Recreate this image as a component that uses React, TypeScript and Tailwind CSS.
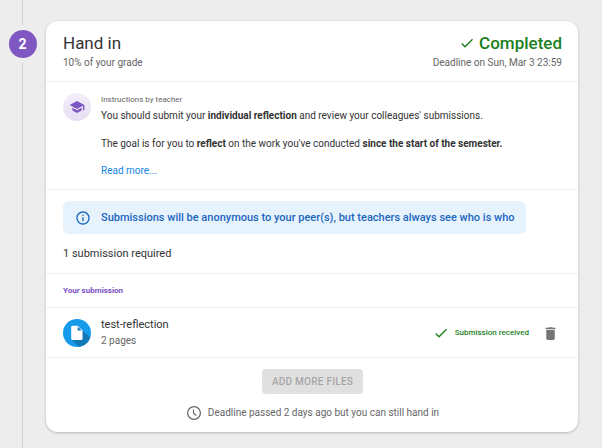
import type { ReactNode } from "react";

function Check({ className }: { className: string }) {
  return (
    <svg viewBox="0 0 24 24" className={className} fill="currentColor" aria-hidden="true">
      <path d="M9 16.17 4.83 12l-1.42 1.41L9 19 21 7l-1.41-1.41z" />
    </svg>
  );
}

function GraduationCap() {
  return (
    <svg viewBox="0 0 24 24" className="size-4" fill="currentColor" aria-hidden="true">
      <path d="M5 13.18v4L12 21l7-3.82v-4L12 17l-7-3.82zM12 3 1 9l11 6 9-4.91V17h2V9L12 3z" />
    </svg>
  );
}

function Info() {
  return (
    <svg viewBox="0 0 24 24" className="size-4 shrink-0" fill="currentColor" aria-hidden="true">
      <path d="M11 7h2v2h-2zm0 4h2v6h-2zm1-9C6.48 2 2 6.48 2 12s4.480 10 10 10 10-4.480 10-10S17.520 2 12 2zm0 18c-4.410 0-8-3.590-8-8s3.590-8 8-8 8 3.590 8 8-3.590 8-8 8z" />
    </svg>
  );
}

function Trash() {
  return (
    <svg viewBox="0 0 24 24" className="size-[17px]" fill="currentColor" aria-hidden="true">
      <path d="M6 19c0 1.100.9 2 2 2h8c1.100 0 2-.9 2-2V7H6v12zM19 4h-3.500l-1-1h-5l-1 1H5v2h14V4z" />
    </svg>
  );
}

function Clock() {
  return (
    <svg viewBox="0 0 16 16" className="size-4" fill="none" stroke="currentColor" aria-hidden="true">
      <circle cx="8" cy="8" r="6.400" strokeWidth="1.200" />
      <path d="M7.500 4.500v3.800l2.800 2.200" strokeWidth="1.100" />
    </svg>
  );
}

function DocumentBadge() {
  return (
    <svg viewBox="0 0 28 28" className="size-7" aria-hidden="true">
      <defs>
        <clipPath id="disc">
          <circle cx="14" cy="14" r="14" />
        </clipPath>
      </defs>
      <g clipPath="url(#disc)">
        <rect width="28" height="28" fill="#169bea" />
        <path d="M19 11 28 19v9H16l-7-7 10-1z" fill="#1279b8" />
      </g>
      <path d="M9.500 6.800h5.300l4.700 4.600v8.400a1.300 1.300 0 0 1-1.300 1.300H9.500a1.300 1.300 0 0 1-1.300-1.300V8.100a1.300 1.300 0 0 1 1.300-1.300z" fill="#fff" />
      <path d="M14.600 7.600v4h4z" fill="#1279b8" />
    </svg>
  );
}

function Section({ className, children }: { className: string; children: ReactNode }) {
  return <section className={`border-t border-[#eeeeee] pr-4 pl-[17px] ${className}`}>{children}</section>;
}

export default function App() {
  return (
    <main className="flex min-h-screen bg-[#ededed] pr-6 font-[Roboto,sans-serif] text-[10px] leading-[14px] text-[#333333]">
      <aside className="flex w-[45px] shrink-0 flex-col items-center">
        <div className="mb-[5px] h-[25px] w-px bg-[#d2d2d2]" />
        <div className="flex size-7 items-center justify-center rounded-full bg-[#7e57c2] text-[14px] font-bold text-white">
          2
        </div>
        <div className="mt-[5px] w-px grow bg-[#d2d2d2]" />
      </aside>

      <article className="mt-[21px] mb-4 ml-px min-w-0 grow self-start rounded-xl bg-white shadow-[0_1px_3px_rgba(0,0,0,0.22)]">
        <header className="flex justify-between pt-3 pr-4 pb-[11px] pl-[17px]">
          <div>
            <h1 className="text-[17px] leading-5">Hand in</h1>
            <p className="pt-[3px] text-[#666666]">10% of your grade</p>
          </div>
          <div className="flex flex-col items-end">
            <div className="flex items-center gap-1 text-[#1b7f22]">
              <Check className="size-4" />
              <span className="text-[17px] leading-5 font-medium">Completed</span>
            </div>
            <p className="pt-[3px] text-[#666666]">Deadline on Sun, Mar 3 23:59</p>
          </div>
        </header>

        <Section className="flex gap-[10px] py-[11px]">
          <div className="flex size-7 shrink-0 items-center justify-center rounded-full bg-linear-to-b from-[#f3eefa] to-[#e6dff3] text-[#7e57c2]">
            <GraduationCap />
          </div>
          <div>
            <p className="text-[8px] text-[#666666]">Instructions by teacher</p>
            <p className="pt-[2px]">
              You should submit your <b>individual reflection</b> and review your colleagues' submissions.
            </p>
            <p className="pt-[14px]">
              The goal is for you to <b>reflect</b> on the work you've conducted <b>since the start of the semester.</b>
            </p>
            <a href="#more" className="mt-[13px] block text-[#1585e0]">
              Read more...
            </a>
          </div>
        </Section>

        <Section className="py-[11px]">
          <div className="flex min-h-[33px] w-fit items-center gap-[10px] rounded-md bg-[#e6f3fd] pr-[11px] pl-3 text-[11px] leading-4 font-medium text-[#1c66c0]">
            <Info />
            <span>Submissions will be anonymous to your peer(s), but teachers always see who is who</span>
          </div>
          <p className="pt-3 text-[11px] leading-4">1 submission required</p>
        </Section>

        <Section className="pt-[10px] pb-[9px]">
          <h2 className="text-[8px] font-bold text-[#7b4fc4]">Your submission</h2>
        </Section>

        <Section className="flex items-center pt-[10px] pb-[9px]">
          <DocumentBadge />
          <div className="pl-[10px]">
            <p className="text-[11px]">test-reflection</p>
            <p className="pt-[2px] text-[#666666]">2 pages</p>
          </div>
          <div className="ml-auto flex items-center gap-1.5 text-[#1b7f22]">
            <Check className="size-4" />
            <span className="text-[8px] font-medium">Submission received</span>
          </div>
          <button type="button" aria-label="Delete submission" className="mr-[3px] ml-[13px] text-[#757575]">
            <Trash />
          </button>
        </Section>

        <Section className="flex flex-col items-center py-[11px]">
          <button
            type="button"
            disabled
            className="h-[25px] rounded-[4px] bg-[#e0e0e0] px-[10px] text-[10px] font-medium tracking-wide text-[#a6a6a6] uppercase"
          >
            Add more files
          </button>
          <p className="flex items-center gap-1.5 pt-[11px] text-[#666666]">
            <Clock />
            Deadline passed 2 days ago but you can still hand in
          </p>
        </Section>
      </article>
    </main>
  );
}
